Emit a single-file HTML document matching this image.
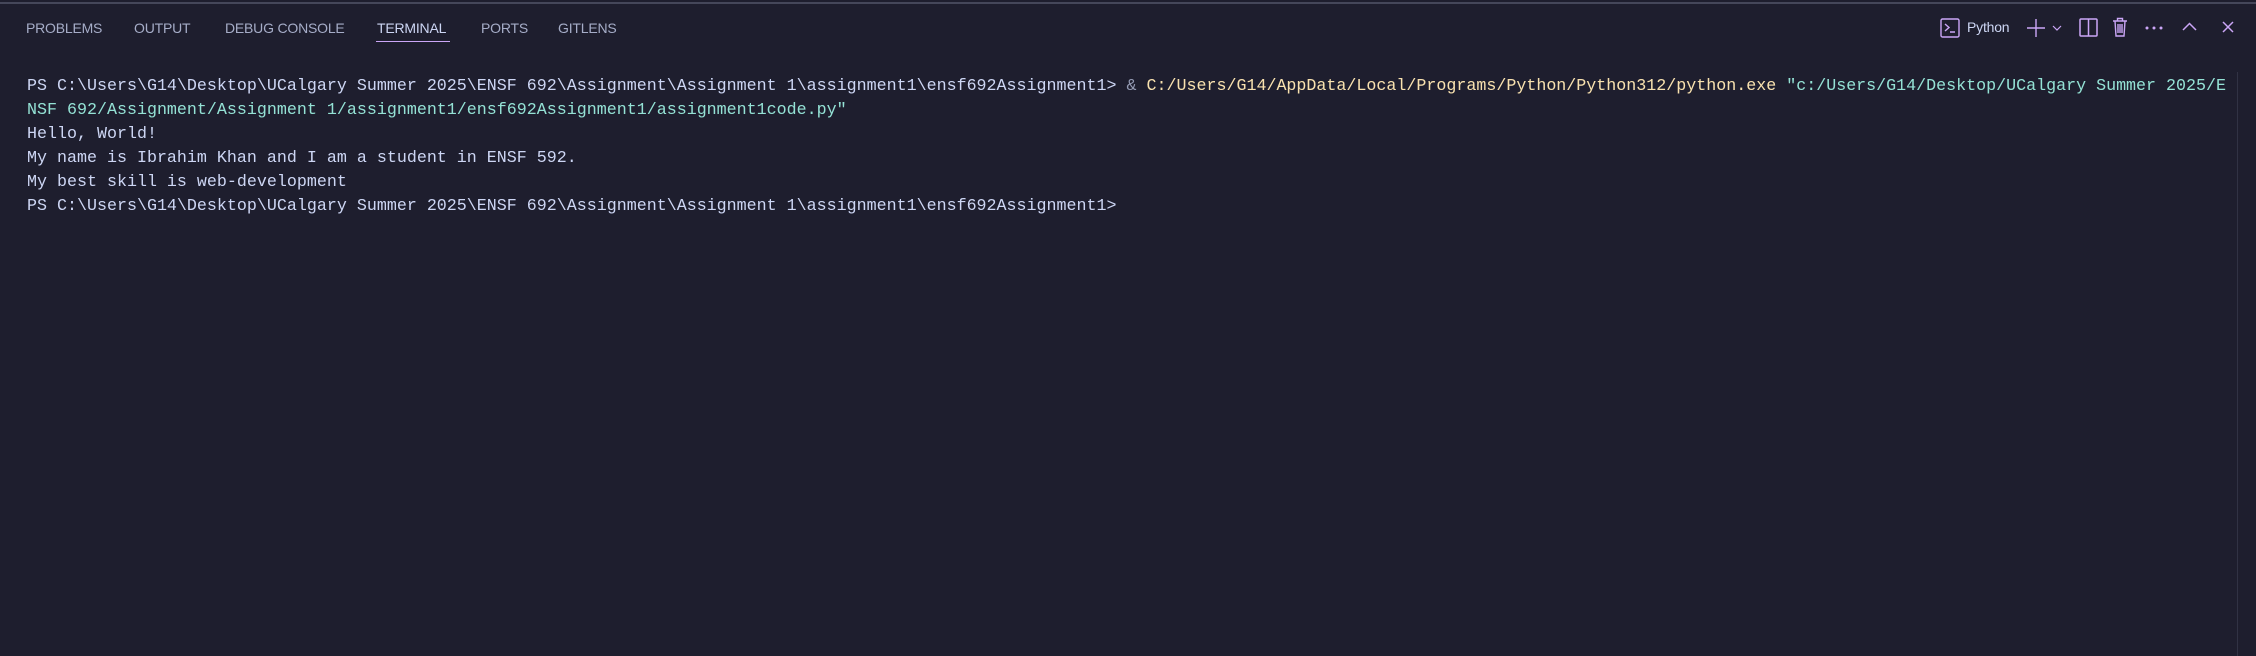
<!DOCTYPE html>
<html><head><meta charset="utf-8"><style>
html,body{margin:0;padding:0;width:2256px;height:656px;background:#1e1e2e;overflow:hidden}
body{position:relative;font-family:"Liberation Sans",sans-serif}
.top{position:absolute;left:0;top:2px;width:2256px;height:2px;background:#45475a}
.tab{position:absolute;top:19px;font-size:14px;color:#a6adc8;line-height:18px;letter-spacing:-0.2px}
.act{color:#cdd6f4}
.ul{position:absolute;left:376px;top:41px;width:74px;height:1px;background:#cba6f7}
.term{position:absolute;left:27px;top:75px;font-family:"Liberation Mono",monospace;font-size:16.67px;line-height:24px;color:#cdd6f4;white-space:pre}
.y{color:#f9e2af}.g{color:#94e2d5}.d{color:#9399b2}
.sb{position:absolute;left:2237px;top:72px;width:1px;height:584px;background:#313244}
svg{position:absolute}
</style></head><body>
<div class="top"></div>
<div class="tab" style="left:26px">PROBLEMS</div>
<div class="tab" style="left:134px">OUTPUT</div>
<div class="tab" style="left:225px">DEBUG CONSOLE</div>
<div class="tab act" style="left:377px">TERMINAL</div>
<div class="tab" style="left:481px">PORTS</div>
<div class="tab" style="left:558px">GITLENS</div>
<div class="ul"></div>

<svg style="left:1940px;top:18px" width="20" height="20" viewBox="0 0 20 20" fill="none" stroke="#cba6f7" stroke-width="1.4"><rect x="1" y="1" width="18" height="18" rx="1.5"/><path d="M5 6l4 3.5-4 3.5M10 14h5"/></svg>
<div class="tab act" style="left:1967px;top:18px;font-size:14px">Python</div>
<svg style="left:2026px;top:18px" width="20" height="20" viewBox="0 0 20 20" stroke="#cba6f7" stroke-width="1.4"><path d="M10 1v18M1 10h18"/></svg>
<svg style="left:2052px;top:24px" width="10" height="8" viewBox="0 0 10 8" fill="none" stroke="#cba6f7" stroke-width="1.2"><path d="M1 2l4 4 4-4"/></svg>
<svg style="left:2079px;top:18px" width="19" height="19" viewBox="0 0 19 19" fill="none" stroke="#cba6f7" stroke-width="1.5"><rect x="1" y="1" width="17" height="17" rx="1"/><path d="M9.5 1v17"/></svg>
<svg style="left:2112px;top:17px" width="16" height="20" viewBox="0 0 16 20" fill="none" stroke="#cba6f7" stroke-width="1.4"><path d="M1 4h14M5.5 4V1.5h5V4M3 4l1 15h8l1-15M6 7v9M8 7v9M10 7v9"/></svg>
<svg style="left:2145px;top:26px" width="18" height="4" viewBox="0 0 18 4" fill="#cba6f7"><circle cx="2" cy="2" r="1.5"/><circle cx="9" cy="2" r="1.5"/><circle cx="16" cy="2" r="1.5"/></svg>
<svg style="left:2182px;top:22px" width="15" height="9" viewBox="0 0 15 9" fill="none" stroke="#cba6f7" stroke-width="1.5"><path d="M1 8l6.5-6.5L14 8"/></svg>
<svg style="left:2222px;top:21px" width="12" height="12" viewBox="0 0 12 12" fill="none" stroke="#cba6f7" stroke-width="1.5"><path d="M1 1l10 10M11 1L1 11"/></svg>

<div class="term">PS C:\Users\G14\Desktop\UCalgary Summer 2025\ENSF 692\Assignment\Assignment 1\assignment1\ensf692Assignment1&gt; <span class="d">&amp;</span> <span class="y">C:/Users/G14/AppData/Local/Programs/Python/Python312/python.exe</span> <span class="g">"c:/Users/G14/Desktop/UCalgary Summer 2025/E
NSF 692/Assignment/Assignment 1/assignment1/ensf692Assignment1/assignment1code.py"</span>
Hello, World!
My name is Ibrahim Khan and I am a student in ENSF 592.
My best skill is web-development
PS C:\Users\G14\Desktop\UCalgary Summer 2025\ENSF 692\Assignment\Assignment 1\assignment1\ensf692Assignment1&gt; </div>
<div class="sb"></div>
</body></html>
